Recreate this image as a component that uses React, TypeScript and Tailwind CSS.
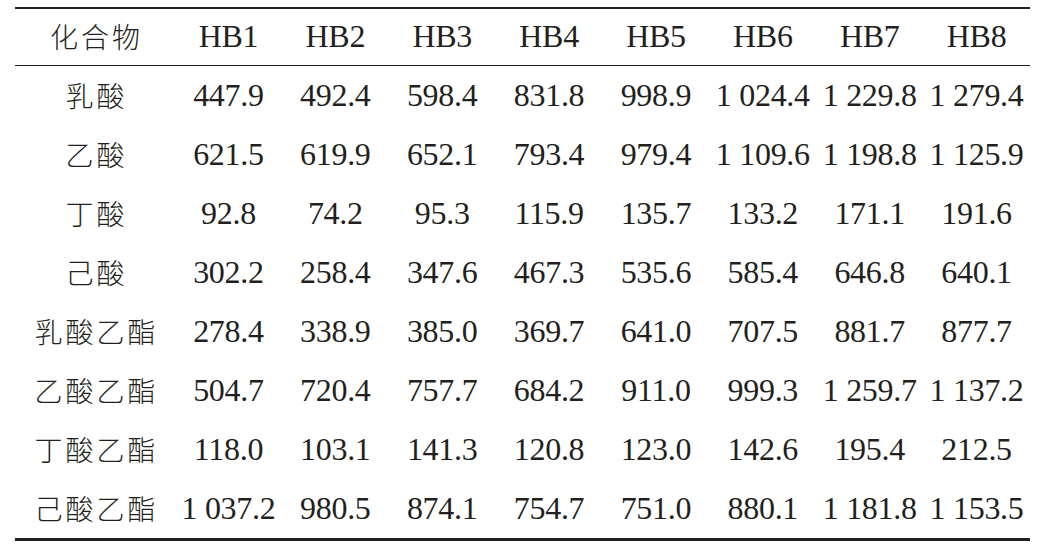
import React from "react";

const header = ["化合物", "HB1", "HB2", "HB3", "HB4", "HB5", "HB6", "HB7", "HB8"];

const rows: string[][] = [
  ["乳酸", "447.9", "492.4", "598.4", "831.8", "998.9", "1 024.4", "1 229.8", "1 279.4"],
  ["乙酸", "621.5", "619.9", "652.1", "793.4", "979.4", "1 109.6", "1 198.8", "1 125.9"],
  ["丁酸", "92.8", "74.2", "95.3", "115.9", "135.7", "133.2", "171.1", "191.6"],
  ["己酸", "302.2", "258.4", "347.6", "467.3", "535.6", "585.4", "646.8", "640.1"],
  ["乳酸乙酯", "278.4", "338.9", "385.0", "369.7", "641.0", "707.5", "881.7", "877.7"],
  ["乙酸乙酯", "504.7", "720.4", "757.7", "684.2", "911.0", "999.3", "1 259.7", "1 137.2"],
  ["丁酸乙酯", "118.0", "103.1", "141.3", "120.8", "123.0", "142.6", "195.4", "212.5"],
  ["己酸乙酯", "1 037.2", "980.5", "874.1", "754.7", "751.0", "880.1", "1 181.8", "1 153.5"],
];

const cjk = "font-['Noto_Sans_CJK_SC',sans-serif] text-[28px] tracking-[3px] pl-[3px] font-light";
const num = "font-['Liberation_Serif','Times_New_Roman',serif] text-[32px] tracking-[-0.3px]";

const Cell = ({ value, first }: { value: string; first?: boolean }) => (
  <div className={`flex items-center justify-center whitespace-nowrap leading-none ${first ? cjk : num}`}>
    {value}
  </div>
);

export default function App() {
  return (
    <div className="w-[1053px] h-[552px] bg-white pt-[7px] pl-[15px] text-[#231f20]">
      <div className="w-[1015px] border-t-2 border-b-[3px] border-[#231f20]">
        <div className="grid grid-cols-[160px_repeat(8,1fr)] h-[57px] border-b border-[#231f20] pb-[2px]">
          {header.map((h, i) => (
            <Cell key={h} value={h} first={i === 0} />
          ))}
        </div>
        {rows.map((r) => (
          <div key={r[0]} className="grid grid-cols-[160px_repeat(8,1fr)] h-[59px] pb-[1px]">
            {r.map((v, i) => (
              <Cell key={i} value={v} first={i === 0} />
            ))}
          </div>
        ))}
      </div>
    </div>
  );
}
